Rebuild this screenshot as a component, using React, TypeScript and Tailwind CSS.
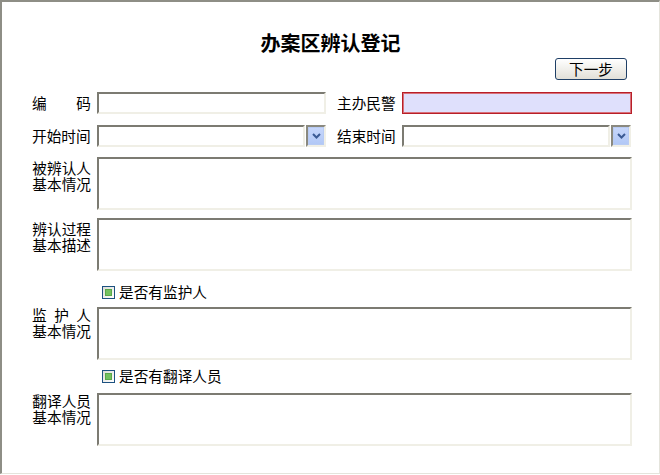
import React from "react";

const inset =
  "border-2 border-solid border-t-[#7c7b72] border-l-[#7c7b72] border-b-[#f0efe6] border-r-[#f0efe6] bg-white";

function Chevron() {
  return (
    <svg width="9" height="6" viewBox="0 0 9 6">
      <path d="M1 1 L4.5 4.5 L8 1" fill="none" stroke="#3b5a94" strokeWidth="2" />
    </svg>
  );
}

function Select({ w }: { w: number }) {
  return (
    <div className="flex h-[22px]" style={{ width: w }}>
      <div className={`flex-1 h-full ${inset}`} />
      <div className="ml-[1px] w-[20px] h-full border-2 border-solid border-t-[#8a897f] border-l-[#8a897f] border-b-[#f0efe6] border-r-[#f0efe6] bg-white">
        <div className="w-full h-full flex items-center justify-center bg-linear-to-b from-[#c6d6fb] to-[#b2c8f6] border border-[#b8cbf3]">
          <Chevron />
        </div>
      </div>
    </div>
  );
}

function Check() {
  return (
    <div className="w-[13px] h-[13px] border border-[#1c5180] bg-linear-to-br from-[#dcdcd6] to-white flex items-center justify-center">
      <div className="w-[7px] h-[7px] bg-[#73c15f] border border-[#5aa84a]" />
    </div>
  );
}

function TwoLine({ a, b, pt, spread }: { a: string; b: string; pt: string; spread?: boolean }) {
  return (
    <div className={`w-[59px] mr-[6px] leading-[16px] text-right whitespace-nowrap ${pt}`}>
      {spread ? (
        <div className="flex justify-between h-[16px]">
          {a.split(" ").map((c, i) => (
            <span key={i}>{c}</span>
          ))}
        </div>
      ) : (
        <div className="h-[16px]">{a}</div>
      )}
      <div className="h-[16px]">{b}</div>
    </div>
  );
}

export default function App() {
  return (
    <div className="w-[660px] h-[474px] border-t-2 border-l-2 border-r border-b border-solid border-t-[#8e8e86] border-l-[#8e8e86] border-r-[#e4e4dc] border-b-[#e4e4dc] bg-white text-black font-['Noto_Sans_CJK_SC',sans-serif] text-[14.67px]">
      <div className="pt-[28px]">
        <div className="h-[25px] leading-[25px] text-[20px] font-bold text-center">办案区辨认登记</div>
      </div>
      <div className="mt-[3px] flex justify-end pr-[32px]">
        <button className="w-[72px] h-[22px] rounded-[3px] border border-solid border-[#1f3f66] bg-linear-to-b from-white to-[#e2e0d8] leading-[20px] text-[14.67px]">
          下一步
        </button>
      </div>
      <div className="mt-[12px] pl-[30px]">
        <div className="flex items-center h-[22px]">
          <div className="w-[59px] mr-[6px] flex justify-between">
            <span>编</span>
            <span>码</span>
          </div>
          <div className={`w-[229px] h-[22px] ${inset}`} />
          <div className="ml-[11px] w-[60px] mr-[5px] whitespace-nowrap">主办民警</div>
          <div className="w-[230px] h-[22px] border border-solid border-[#b81f28] shadow-[inset_0_0_0_1px_#d8707a] bg-[#dfe0fc]" />
        </div>
        <div className="mt-[11px] flex items-center h-[22px]">
          <div className="w-[59px] mr-[6px] whitespace-nowrap">开始时间</div>
          <Select w={229} />
          <div className="ml-[11px] w-[60px] mr-[5px] whitespace-nowrap">结束时间</div>
          <Select w={229} />
        </div>
        <div className="mt-[10px] flex items-start">
          <TwoLine a="被辨认人" b="基本情况" pt="pt-[3px]" />
          <div className={`w-[535px] h-[53px] ${inset}`} />
        </div>
        <div className="mt-[8px] flex items-start">
          <TwoLine a="辨认过程" b="基本描述" pt="pt-[3px]" />
          <div className={`w-[535px] h-[53px] ${inset}`} />
        </div>
        <div className="mt-[12px] h-[18px] flex items-center pl-[70px]">
          <Check />
          <span className="ml-[4px] leading-[18px]">是否有监护人</span>
        </div>
        <div className="mt-[6px] flex items-start">
          <TwoLine a="监 护 人" b="基本情况" pt="pt-0" spread />
          <div className={`w-[535px] h-[53px] ${inset}`} />
        </div>
        <div className="mt-[7px] h-[18px] flex items-center pl-[70px]">
          <Check />
          <span className="ml-[4px] leading-[18px]">是否有翻译人员</span>
        </div>
        <div className="mt-[8px] flex items-start">
          <TwoLine a="翻译人员" b="基本情况" pt="pt-0" />
          <div className={`w-[535px] h-[53px] ${inset}`} />
        </div>
      </div>
    </div>
  );
}
